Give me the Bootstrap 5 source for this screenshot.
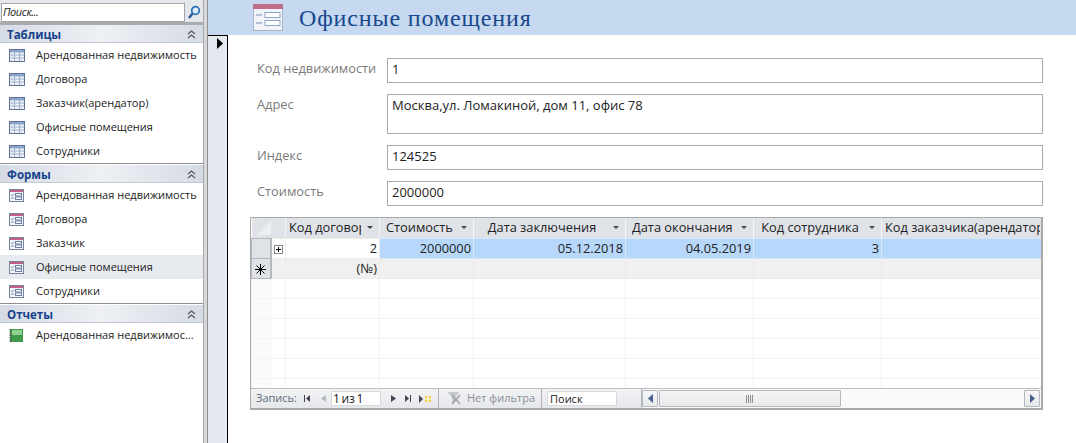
<!DOCTYPE html>
<html lang="ru">
<head>
<meta charset="UTF-8">
<title>Офисные помещения</title>
<link rel="stylesheet" href="https://cdn.jsdelivr.net/npm/bootstrap@5.3.0/dist/css/bootstrap.min.css">
<style>
html, body { height: 443px; overflow: hidden; background: #fff; }
body { font-family: "Open Sans", "Noto Sans", sans-serif; font-size: 11px; color: #222; }
.shell { height: 443px; }
.nav-pane { width: 203px; flex: none; }
.nav-search { height: 25px; padding: 3px 0 0 1px; background: #e4e7ec; border-bottom: 3px solid #a8abb0; }
.nav-search-box { width: 184px; height: 19px; background: #fff; border: 1px solid #a5a5a5; font-style: italic; font-size: 11px; padding-left: 1px; line-height: 16px; letter-spacing: -.4px; }
.nav-search-btn { width: 18px; text-align: center; }
.nav-section { border-top: 1px solid #8e8e8e; padding-top: 1px; }
.nav-head { height: 18px; padding: 2px 7px 0; background: linear-gradient(90deg, #d5dbe5, #eef0f4 50%, #d5dbe5); border-bottom: 1px solid #c4c8cf; font-weight: 700; font-size: 11.5px; line-height: 15px; color: #15428b; }
.nav-row { height: 24px; padding-left: 9px; gap: 11px; }
.nav-row.form-row { gap: 12px; }
.nav-row.is-current { background: #e7eaef; }
.nav-row span { line-height: 22px; }
.splitter { width: 5px; flex: none; background: #d7d9dc; border-left: 1px solid #a8a8a8; border-right: 1px solid #8f8f8f; }
.main-pane { min-width: 0; }
.form-title { height: 35px; background: #c6d9f0; padding-left: 45px; gap: 15px; }
.form-title h1 { margin: 0; padding-top: 1px; font-family: "Liberation Serif", serif; font-size: 24px; font-weight: 400; color: #17478c; letter-spacing: .85px; line-height: 35px; }
.selector { width: 20px; flex: none; background: #e4e8ef; border-top: 1px solid #000; border-right: 1px solid #000; padding: 2px 0 0 9px; }
.detail { padding: 23px 33px 0 22px; min-width: 0; }
.field { margin-bottom: 11px; height: 25px; }
.field.tall { height: 40px; }
.field label { width: 137px; flex: none; padding: 1px 0 0 7px; font-size: 12.8px; color: #7a7a7a; }
.field-box { flex: 1; border: 1px solid #a9a9a9; padding: 1px 4px 0; font-size: 13px; color: #222; }
.dsheet-wrap { border: 1px solid #a9a9a9; border-width: 1px 2px 2px 1px; height: 193px; background: #fff; }
.dsheet { table-layout: fixed; border-collapse: collapse; width: 790px; font-size: 12.8px; }
.dsheet col:nth-child(1) { width: 19px; }
.dsheet col:nth-child(2) { width: 15px; }
.dsheet col:nth-child(3), .dsheet col:nth-child(4) { width: 94px; }
.dsheet col:nth-child(5) { width: 152px; }
.dsheet col:nth-child(6), .dsheet col:nth-child(7) { width: 128px; }
.dsheet col:nth-child(8) { width: 160px; }
.dsheet td, .dsheet th { padding: 0 2px; height: 20px; border: 1px solid #ecece4; white-space: nowrap; overflow: hidden; text-align: right; font-weight: 400; }
.dsheet th { background: #dfe3e8; border: 0; border-right: 1px solid #f3f4f6; text-align: left; padding: 0 5px 0 6px; }
.dsheet th.narrow { padding-left: 3px; }
.dsheet th.wide { padding-right: 1px; }
.dsheet th.corner { padding: 0; vertical-align: middle; }
.dsheet .sel { background: #dfe3e8; border-color: #b5b9bf; border-right: 2px solid #b5b9bf; text-align: center; padding: 0; }
.dsheet .blank-sel { background: #fafafb; border-color: #ecece4; }
.dsheet .exp { padding: 0; text-align: center; }
.dsheet tr.hit td.v { background: #b7d8fb; border-color: #d5e6f7; }
.dsheet tr.fresh td { background: #f0f0f0; }
.dsheet tr.fresh td.sel { background: #dfe3e8; }
.dsheet .blank td { border-color: #f3f3ee; }
.head-in { display: flex; align-items: center; justify-content: space-between; gap: 6px; }
.head-in span { overflow: hidden; min-width: 0; }
.head-in.center span { flex: 1; text-align: center; padding-right: 3px; }
.head-in i { flex: none; width: 0; height: 0; border: 3px solid transparent; border-top-color: #444; border-bottom: 0; margin-right: 1px; }
.recbar { height: 20px; border-top: 1px solid #bcc0c6; background: linear-gradient(#f1f2f4, #e6e8eb); font-size: 11px; }
.recnav { width: 187px; flex: none; padding-left: 5px; color: #5f6b7a; }
.recnav svg { flex: none; }
.rec-label { width: 47px; flex: none; }
.rec-prev { margin-left: 11px; }
.rec-cur { width: 50px; height: 15px; flex: none; margin: 0 10px 0 5px; background: #fff; border: 1px solid #d6d9de; color: #222; padding-left: 1px; line-height: 13px; font-size: 12px; word-spacing: -1.5px; }
.rec-last { margin-left: 9px; }
.rec-new { margin-left: 7px; }
.recfilter { width: 104px; height: 19px; flex: none; padding-left: 8px; gap: 6px; color: #8a8f96; border-left: 1px solid #b0b4ba; border-right: 1px solid #b0b4ba; }
.recsearch-cell { width: 99px; flex: none; padding-left: 5px; }
.recsearch { width: 70px; height: 15px; background: #fff; border: 1px solid #d6d9de; padding-left: 2px; line-height: 13px; color: #222; }
.hscroll { flex: 1; height: 19px; background: #fafafa; padding: 1px 1px 1px 0; border-left: 1px solid #b0b4ba; min-width: 0; }
.hs-btn { width: 16px; flex: none; background: linear-gradient(#f6f7f8, #e6e8ea); border: 1px solid #b4b8be; border-radius: 1px; }
.hs-thumb { width: 182px; flex: none; margin-left: 1px; background: linear-gradient(#f5f5f6, #e8e9ea); border: 1px solid #b4b8be; border-radius: 1px; }
</style>
</head>
<body>
<svg width="0" height="0" class="position-absolute">
  <defs>
    <symbol id="ic-table" viewBox="0 0 16 13">
      <rect x=".5" y=".5" width="15" height="12" fill="#eef2f8" stroke="#5f7196"/>
      <rect x="1" y="1" width="14" height="2.5" fill="#8fa6cc"/>
      <path d="M1 6h14M1 9h14M5.5 3v9M10.5 3v9" stroke="#9fb0cc" fill="none"/>
    </symbol>
    <symbol id="ic-form" viewBox="0 0 15 13">
      <rect x=".5" y=".5" width="14" height="12" fill="#f3f5fa" stroke="#76829c"/>
      <rect x="1" y="1" width="13" height="2" fill="#c4607e"/>
      <path d="M2 6h3M2 9h3" stroke="#7f8fb0" fill="none"/>
      <rect x="6.5" y="4.5" width="6" height="2.5" fill="#fff" stroke="#6a7da3"/>
      <rect x="6.5" y="8" width="6" height="2.5" fill="#fff" stroke="#6a7da3"/>
    </symbol>
    <symbol id="ic-up" viewBox="0 0 9 9">
      <path d="M1 4l3.5-3L8 4M1 8l3.5-3L8 8" fill="none" stroke="#555" stroke-width="1.2"/>
    </symbol>
  </defs>
</svg>
<div class="shell d-flex">
  <div class="nav-pane d-flex flex-column">
    <div class="nav-search d-flex">
      <div class="nav-search-box">Поиск...</div>
      <div class="nav-search-btn">
        <svg width="14" height="15" viewBox="0 0 14 15"><circle cx="8.5" cy="5.5" r="3.8" fill="#dcecfa" stroke="#2f73b5" stroke-width="1.8"/><path d="M5.5 8.5L2 13" stroke="#2a5f96" stroke-width="2.6"/></svg>
      </div>
    </div>
    <div class="nav-head d-flex justify-content-between align-items-center"><span>Таблицы</span><svg width="9" height="9"><use href="#ic-up"/></svg></div>
    <div class="nav-row d-flex align-items-center"><svg width="16" height="13"><use href="#ic-table"/></svg><span>Арендованная недвижимость</span></div>
    <div class="nav-row d-flex align-items-center"><svg width="16" height="13"><use href="#ic-table"/></svg><span>Договора</span></div>
    <div class="nav-row d-flex align-items-center"><svg width="16" height="13"><use href="#ic-table"/></svg><span>Заказчик(арендатор)</span></div>
    <div class="nav-row d-flex align-items-center"><svg width="16" height="13"><use href="#ic-table"/></svg><span>Офисные помещения</span></div>
    <div class="nav-row d-flex align-items-center"><svg width="16" height="13"><use href="#ic-table"/></svg><span>Сотрудники</span></div>
    <div class="nav-section">
      <div class="nav-head d-flex justify-content-between align-items-center"><span>Формы</span><svg width="9" height="9"><use href="#ic-up"/></svg></div>
      <div class="nav-row form-row d-flex align-items-center"><svg width="15" height="13"><use href="#ic-form"/></svg><span>Арендованная недвижимость</span></div>
      <div class="nav-row form-row d-flex align-items-center"><svg width="15" height="13"><use href="#ic-form"/></svg><span>Договора</span></div>
      <div class="nav-row form-row d-flex align-items-center"><svg width="15" height="13"><use href="#ic-form"/></svg><span>Заказчик</span></div>
      <div class="nav-row form-row is-current d-flex align-items-center"><svg width="15" height="13"><use href="#ic-form"/></svg><span>Офисные помещения</span></div>
      <div class="nav-row form-row d-flex align-items-center"><svg width="15" height="13"><use href="#ic-form"/></svg><span>Сотрудники</span></div>
    </div>
    <div class="nav-section">
      <div class="nav-head d-flex justify-content-between align-items-center"><span>Отчеты</span><svg width="9" height="9"><use href="#ic-up"/></svg></div>
      <div class="nav-row form-row d-flex align-items-center"><svg width="15" height="13" viewBox="0 0 15 13"><rect x="1" y="0" width="13" height="13" fill="#3f9a4a"/><rect x="3" y="1" width="10" height="5" fill="#8fd08f"/><path d="M1.5 0v13" stroke="#555" stroke-dasharray="1 1" stroke-width="2"/></svg><span>Арендованная недвижимос...</span></div>
    </div>
  </div>
  <div class="splitter"></div>
  <div class="main-pane flex-grow-1 d-flex flex-column">
    <div class="form-title d-flex align-items-center">
      <svg width="31" height="29" viewBox="0 0 31 29"><rect x=".5" y="1.5" width="29" height="26" fill="#f2f4f9" stroke="#a9b2c4"/><rect x="0" y="1" width="30" height="5" fill="#c26d8c"/><path d="M3 12h6M3 20h6" stroke="#9fb1d0" stroke-width="1.5"/><rect x="12" y="9.5" width="15" height="5" fill="#fff" stroke="#8fa5c8"/><rect x="12" y="17.5" width="15" height="5" fill="#fff" stroke="#8fa5c8"/></svg>
      <h1>Офисные помещения</h1>
    </div>
    <div class="d-flex flex-grow-1">
      <div class="selector"><svg class="d-block" width="7" height="11" viewBox="0 0 7 11"><path d="M0 0l6 5.5L0 11z" fill="#000"/></svg></div>
      <div class="detail flex-grow-1">
        <div class="field d-flex"><label>Код недвижимости</label><div class="field-box">1</div></div>
        <div class="field tall d-flex"><label>Адрес</label><div class="field-box">Москва,ул. Ломакиной, дом 11, офис 78</div></div>
        <div class="field d-flex"><label>Индекс</label><div class="field-box">124525</div></div>
        <div class="field d-flex"><label>Стоимость</label><div class="field-box">2000000</div></div>
        <div class="dsheet-wrap d-flex flex-column">
          <div class="flex-grow-1 overflow-hidden">
            <table class="dsheet">
              <colgroup><col><col><col><col><col><col><col><col></colgroup>
              <tr>
                <th class="corner" colspan="2"><svg class="d-block ms-1" width="16" height="16" viewBox="0 0 16 16"><path d="M15 1v14H1z" fill="#eceef1"/></svg></th>
                <th class="narrow"><div class="head-in"><span>Код договора</span><i></i></div></th>
                <th><div class="head-in"><span>Стоимость</span><i></i></div></th>
                <th><div class="head-in center"><span>Дата заключения</span><i></i></div></th>
                <th><div class="head-in center"><span>Дата окончания</span><i></i></div></th>
                <th><div class="head-in center"><span>Код сотрудника</span><i></i></div></th>
                <th class="narrow wide"><div class="head-in"><span>Код заказчика(арендатора)</span></div></th>
              </tr>
              <tr class="hit">
                <td class="sel"></td>
                <td class="exp"><svg width="9" height="9" viewBox="0 0 9 9"><rect x=".5" y=".5" width="8" height="8" fill="#fff" stroke="#888"/><path d="M2 4.5h5M4.5 2v5" stroke="#000"/></svg></td>
                <td>2</td><td class="v">2000000</td><td class="v">05.12.2018</td><td class="v">04.05.2019</td><td class="v">3</td><td class="v"></td>
              </tr>
              <tr class="fresh">
                <td class="sel"><svg width="11" height="11" viewBox="0 0 11 11"><path d="M5.5 0v11M0 5.500h11M1.500 1.500l8 8M9.500 1.500l-8 8" stroke="#000" fill="none"/></svg></td><td></td><td>(№)</td><td></td><td></td><td></td><td></td><td></td>
              </tr>
              <tr class="blank"><td class="blank-sel"></td><td></td><td></td><td></td><td></td><td></td><td></td><td></td></tr>
              <tr class="blank"><td class="blank-sel"></td><td></td><td></td><td></td><td></td><td></td><td></td><td></td></tr>
              <tr class="blank"><td class="blank-sel"></td><td></td><td></td><td></td><td></td><td></td><td></td><td></td></tr>
              <tr class="blank"><td class="blank-sel"></td><td></td><td></td><td></td><td></td><td></td><td></td><td></td></tr>
              <tr class="blank"><td class="blank-sel"></td><td></td><td></td><td></td><td></td><td></td><td></td><td></td></tr>
              <tr class="blank"><td class="blank-sel"></td><td></td><td></td><td></td><td></td><td></td><td></td><td></td></tr>
            </table>
          </div>
          <div class="recbar d-flex align-items-center">
            <div class="recnav d-flex align-items-center">
              <span class="rec-label">Запись:</span>
              <svg width="7" height="7" viewBox="0 0 7 7"><path d="M1.500 0v7" stroke="#445"/><path d="M7 0L3 3.500 7 7z" fill="#445"/></svg>
              <svg width="5" height="7" class="rec-prev" viewBox="0 0 5 7"><path d="M5 0L0 3.500 5 7z" fill="#b5b9bf"/></svg>
              <div class="rec-cur">1 из 1</div>
              <svg width="5" height="7" viewBox="0 0 5 7"><path d="M0 0l5 3.500L0 7z" fill="#445"/></svg>
              <svg width="7" height="7" class="rec-last" viewBox="0 0 7 7"><path d="M0 0l4 3.500L0 7z" fill="#445"/><path d="M5.500 0v7" stroke="#445"/></svg>
              <svg width="13" height="8" class="rec-new" viewBox="0 0 13 8"><path d="M0 0l4 4-4 4z" fill="#445"/><rect x="6" y="1" width="6" height="6" fill="#f3cf4f"/><path d="M9 1v6M6 4h6" stroke="#fff"/></svg>
            </div>
            <div class="recfilter d-flex align-items-center"><svg width="14" height="13" viewBox="0 0 14 13"><path d="M0 0h12L8 5v6L5 9V5z" fill="#c5c8cc"/><path d="M5 3l8 9M13 3l-8 9" stroke="#9a9da2" stroke-width="1.500"/></svg><span>Нет фильтра</span></div>
            <div class="recsearch-cell"><div class="recsearch">Поиск</div></div>
            <div class="hscroll d-flex">
              <div class="hs-btn d-flex align-items-center justify-content-center"><svg width="5" height="9" viewBox="0 0 5 9"><path d="M5 0L0 4.500 5 9z" fill="#4a5f8f"/></svg></div>
              <div class="hs-thumb d-flex align-items-center justify-content-center"><svg width="8" height="8" viewBox="0 0 8 8"><path d="M.5 0v8M2.500 0v8M4.500 0v8M6.500 0v8" stroke="#8a8a8a"/></svg></div>
              <div class="flex-grow-1"></div>
              <div class="hs-btn d-flex align-items-center justify-content-center"><svg width="5" height="9" viewBox="0 0 5 9"><path d="M0 0l5 4.500L0 9z" fill="#4a5f8f"/></svg></div>
            </div>
          </div>
        </div>
      </div>
    </div>
  </div>
</div>
<script src="https://cdn.jsdelivr.net/npm/bootstrap@5.3.0/dist/js/bootstrap.bundle.min.js"></script>
</body>
</html>
